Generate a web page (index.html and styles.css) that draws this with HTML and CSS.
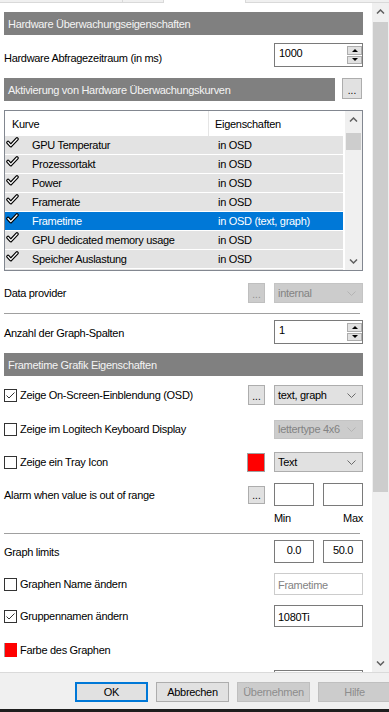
FILE: index.html
```html
<!DOCTYPE html>
<html lang="de">
<head>
  <meta charset="UTF-8" />
  <meta name="viewport" content="width=device-width, initial-scale=1.0"/>
  <title>Überwachung - Eigenschaften</title>
  <link rel="stylesheet" href="styles.css">
</head>
<body>
  <div class="window">

    <!-- Reiter oben (nur die Unterkante sichtbar) -->
    <div class="tab-strip">
      <div class="tab tab-a"></div>
      <div class="tab tab-b"></div>
      <div class="tab tab-active"></div>
      <div class="tab tab-c"></div>
    </div>

    <div class="content">
      <div class="pane">

        <div class="section-bar bar-first">Hardware Überwachungseigenschaften</div>

        <div class="row row-poll">
          <span class="label label-low">Hardware Abfragezeitraum (in ms)</span>
          <div class="spin">
            <span class="spin-value">1000</span>
            <div class="spin-buttons">
              <span class="spin-btn up"></span>
              <span class="spin-btn down"></span>
            </div>
          </div>
        </div>

        <div class="bar-row">
          <div class="section-bar">Aktivierung von Hardware Überwachungskurven</div>
          <button class="dots-btn tall">...</button>
        </div>

        <!-- Liste der Kurven -->
        <div class="curve-list">
          <div class="curve-main">
            <div class="curve-head">
              <span class="head-name">Kurve</span>
              <span class="head-prop">Eigenschaften</span>
            </div>
            <div class="curve-rows" id="curve-rows"></div>
          </div>
          <div class="list-scroll">
            <span class="arrow-cell">
              <svg width="9" height="5" viewBox="0 0 9 5"><polyline points="1,4.5 4.5,1 8,4.5" fill="none" stroke="#606060" stroke-width="1.5"/></svg>
            </span>
            <span class="list-thumb"></span>
            <span class="scroll-space"></span>
            <span class="arrow-cell">
              <svg width="9" height="5" viewBox="0 0 9 5"><polyline points="1,0.5 4.5,4 8,0.5" fill="none" stroke="#606060" stroke-width="1.5"/></svg>
            </span>
          </div>
        </div>

        <div class="row row-provider">
          <span class="label">Data provider</span>
          <div class="controls">
            <button class="dots-btn disabled">...</button>
            <div class="combo disabled">
              <span>internal</span>
              <svg width="9" height="5" viewBox="0 0 9 5"><polyline points="0.5,0.5 4.5,4.5 8.5,0.5" fill="none" stroke="#b4b4b4" stroke-width="1"/></svg>
            </div>
          </div>
        </div>

        <div class="separator sep-first"></div>

        <div class="row row-columns">
          <span class="label label-low-2">Anzahl der Graph-Spalten</span>
          <div class="spin">
            <span class="spin-value">1</span>
            <div class="spin-buttons">
              <span class="spin-btn up"></span>
              <span class="spin-btn down"></span>
            </div>
          </div>
        </div>

        <div class="section-bar bar-third">Frametime Grafik Eigenschaften</div>

        <div class="row row-osd">
          <label class="label check-label">
            <span class="check-box">
              <svg width="11" height="11" viewBox="0 0 11 11"><polyline points="1.5,5.5 4,8 9.5,2.5" fill="none" stroke="#333" stroke-width="1"/></svg>
            </span>
            Zeige On-Screen-Einblendung (OSD)
          </label>
          <div class="controls">
            <button class="dots-btn">...</button>
            <div class="combo">
              <span>text, graph</span>
              <svg width="9" height="5" viewBox="0 0 9 5"><polyline points="0.5,0.5 4.5,4.5 8.5,0.5" fill="none" stroke="#6b6b6b" stroke-width="1"/></svg>
            </div>
          </div>
        </div>

        <div class="row row-logi">
          <label class="label check-label">
            <span class="check-box"></span>
            Zeige im Logitech Keyboard Display
          </label>
          <div class="controls">
            <div class="combo disabled">
              <span>lettertype 4x6</span>
              <svg width="9" height="5" viewBox="0 0 9 5"><polyline points="0.5,0.5 4.5,4.5 8.5,0.5" fill="none" stroke="#b4b4b4" stroke-width="1"/></svg>
            </div>
          </div>
        </div>

        <div class="row row-tray">
          <label class="label check-label">
            <span class="check-box"></span>
            Zeige ein Tray Icon
          </label>
          <div class="controls">
            <span class="swatch"></span>
            <div class="combo">
              <span>Text</span>
              <svg width="9" height="5" viewBox="0 0 9 5"><polyline points="0.5,0.5 4.5,4.5 8.5,0.5" fill="none" stroke="#6b6b6b" stroke-width="1"/></svg>
            </div>
          </div>
        </div>

        <div class="row row-alarm">
          <span class="label">Alarm when value is out of range</span>
          <div class="controls">
            <button class="dots-btn short">...</button>
            <div class="pair">
              <input class="field small" type="text" value="">
              <input class="field small" type="text" value="">
            </div>
          </div>
        </div>

        <div class="minmax">
          <span>Min</span>
          <span>Max</span>
        </div>

        <div class="separator sep-second"></div>

        <div class="row row-limits">
          <span class="label">Graph limits</span>
          <div class="pair">
            <input class="field small centered" type="text" value="0.0">
            <input class="field small centered" type="text" value="50.0">
          </div>
        </div>

        <div class="row row-name">
          <label class="label check-label">
            <span class="check-box"></span>
            Graphen Name ändern
          </label>
          <input class="field wide" type="text" value="Frametime" disabled>
        </div>

        <div class="row row-group">
          <label class="label check-label">
            <span class="check-box">
              <svg width="11" height="11" viewBox="0 0 11 11"><polyline points="1.5,5.5 4,8 9.5,2.5" fill="none" stroke="#333" stroke-width="1"/></svg>
            </span>
            Gruppennamen ändern
          </label>
          <input class="field wide" type="text" value="1080Ti">
        </div>

        <div class="row row-color">
          <span class="label check-label">
            <span class="color-box"></span>
            Farbe des Graphen
          </span>
        </div>

        <div class="row row-next">
          <input class="field wide" type="text" value="">
        </div>

      </div>

      <!-- Bildlaufleiste des Fensters -->
      <div class="page-scroll">
        <span class="arrow-cell">
          <svg width="9" height="5" viewBox="0 0 9 5"><polyline points="1,4.5 4.5,1 8,4.5" fill="none" stroke="#606060" stroke-width="1.5"/></svg>
        </span>
        <span class="page-thumb"></span>
        <span class="scroll-space"></span>
        <span class="arrow-cell">
          <svg width="9" height="5" viewBox="0 0 9 5"><polyline points="1,0.5 4.5,4 8,0.5" fill="none" stroke="#606060" stroke-width="1.5"/></svg>
        </span>
      </div>
    </div>

    <!-- Knöpfe unten -->
    <div class="footer">
      <button class="dlg-btn default">OK</button>
      <button class="dlg-btn">Abbrechen</button>
      <button class="dlg-btn disabled">Übernehmen</button>
      <button class="dlg-btn disabled">Hilfe</button>
    </div>
    <div class="bottom-edge"></div>
  </div>

  <script>
    window.addEventListener('DOMContentLoaded', () => {
      // letzte Zeile ist nur angeschnitten, daher ohne Text
      const curves = [
        ['GPU Temperatur', 'in OSD'],
        ['Prozessortakt', 'in OSD'],
        ['Power', 'in OSD'],
        ['Framerate', 'in OSD'],
        ['Frametime', 'in OSD (text, graph)'],
        ['GPU dedicated memory usage', 'in OSD'],
        ['Speicher Auslastung', 'in OSD'],
        ['', '']
      ];
      const selected = 4;

      const tick = '<svg width="13" height="11" viewBox="0 0 13 11">' +
        '<polyline points="2,5.5 4.8,8.6 11,2" fill="none" stroke="#000" stroke-width="3.6" stroke-linejoin="round" stroke-linecap="round"/>' +
        '<polyline points="2,5.5 4.8,8.6 11,2" fill="none" stroke="#fff" stroke-width="1.3" stroke-linejoin="round" stroke-linecap="round"/>' +
        '</svg>';

      const rows = document.getElementById('curve-rows');
      curves.forEach((c, i) => {
        const row = document.createElement('div');
        row.className = 'curve' + (i === selected ? ' selected' : '');
        row.innerHTML = `<span class="tick">${tick}</span><span class="name">${c[0]}</span><span class="prop">${c[1]}</span>`;
        rows.appendChild(row);
      });
    });
  </script>
</body>
</html>
```

FILE: styles.css
```css
* {
  box-sizing: border-box;
}

body {
  margin: 0;
  font-family: "Liberation Sans", Arial, sans-serif;
  font-size: 11px;
  letter-spacing: -0.3px;
  line-height: 14px;
  color: #000;
  background: #fff;
}

button,
input {
  font: inherit;
  letter-spacing: inherit;
  color: inherit;
  margin: 0;
}

.window {
  width: 389px;
  height: 712px;
  display: flex;
  flex-direction: column;
  overflow: hidden;
}

/* Reiter */
.tab-strip {
  display: flex;
  height: 3px;
  flex-shrink: 0;
}

.tab {
  height: 3px;
  background: #f0f0f0;
  border-bottom: 1px solid #d9d9d9;
  border-right: 1px solid #d9d9d9;
}

.tab-a { width: 123px; }
.tab-b { width: 41px; }

.tab-active {
  width: 82px;
  background: #fff;
  border-bottom: none;
}

.tab-c {
  flex: 1;
  border-right: none;
}

/* Hauptbereich */
.content {
  display: flex;
  height: 669px;
  flex-shrink: 0;
}

.pane {
  width: 372px;
  padding: 0 9px 0 4px;
  overflow: hidden;
}

.section-bar {
  height: 23px;
  background: #808080;
  color: #f4f4f4;
  padding-left: 4px;
  display: flex;
  align-items: center;
  white-space: nowrap;
}

.bar-first { margin-top: 9px; }
.bar-third { margin-top: 9px; }

.bar-row {
  display: flex;
  align-items: flex-start;
  gap: 7px;
  margin-top: 11px;
  padding-right: 1px;
}

.bar-row .section-bar {
  flex: 1;
}

.row {
  display: flex;
  align-items: center;
}

.label {
  flex: 1;
  white-space: nowrap;
}

.label-low { padding-top: 5px; }
.label-low-2 { padding-top: 2px; }

.controls {
  display: flex;
  align-items: center;
  gap: 9px;
  margin-left: auto;
}

.row-poll { margin-top: 8px; height: 24px; }
.row-provider { margin-top: 12px; height: 20px; }
.row-columns { margin-top: 6px; height: 24px; }
.row-osd { margin-top: 9px; height: 20px; }
.row-logi { margin-top: 14px; height: 20px; }
.row-tray { margin-top: 13px; height: 20px; }
.row-alarm { margin-top: 11px; height: 23px; }
.row-limits { margin-top: 6px; height: 23px; }
.row-name { margin-top: 10px; height: 22px; }
.row-group { margin-top: 10px; height: 22px; }
.row-color { margin-top: 13px; height: 20px; }

.row-next {
  margin-top: 10px;
  height: 22px;
  justify-content: flex-end;
}

.separator {
  width: 356px;
  height: 1px;
  background: #a0a0a0;
}

.sep-first { margin-top: 10px; }
.sep-second { margin-top: 8px; }

/* Zahlenfeld mit Pfeilen */
.spin {
  width: 89px;
  height: 24px;
  border: 1px solid #7a7a7a;
  display: flex;
  justify-content: space-between;
  background: #fff;
}

.spin-value {
  padding: 2px 0 0 4px;
}

.spin-buttons {
  display: flex;
  flex-direction: column;
  gap: 1px;
  padding: 2px 0 2px 0;
}

.spin-btn {
  width: 15px;
  height: 9px;
  flex: 1;
  background: #e1e1e1;
  border: 1px solid #adadad;
  display: flex;
  align-items: center;
  justify-content: center;
}

.spin-btn::after {
  content: "";
  border-left: 3px solid transparent;
  border-right: 3px solid transparent;
}

.spin-btn.up::after {
  border-bottom: 3px solid #000;
}

.spin-btn.down::after {
  border-top: 3px solid #000;
}

/* Knöpfe mit drei Punkten */
.dots-btn {
  width: 17px;
  height: 20px;
  padding: 0;
  background: #e1e1e1;
  border: 1px solid #adadad;
  font-size: 10px;
  letter-spacing: 0;
  line-height: 12px;
  padding-top: 4px;
}

.dots-btn.tall {
  width: 20px;
  height: 21px;
  padding-top: 5px;
}

.dots-btn.short {
  height: 18px;
  padding-top: 3px;
}

.dots-btn.disabled {
  background: #cccccc;
  border-color: #bfbfbf;
  color: #8c8c8c;
}

/* Auswahlfelder */
.combo {
  width: 89px;
  height: 20px;
  background: #e1e1e1;
  border: 1px solid #adadad;
  display: flex;
  align-items: center;
  justify-content: space-between;
  padding: 0 6px 0 3px;
  white-space: nowrap;
}

.combo.disabled {
  background: #cccccc;
  border-color: #c4c4c4;
  color: #838383;
}

.row-logi .combo {
  height: 19px;
}

.swatch {
  width: 18px;
  height: 19px;
  background: #ff0000;
  border: 1px solid #a0a0a0;
}

/* Checkboxen */
.check-label {
  display: flex;
  align-items: center;
  gap: 3px;
}

.check-box {
  width: 13px;
  height: 13px;
  border: 1px solid #333;
  background: #fff;
  display: flex;
  flex-shrink: 0;
}

.color-box {
  width: 13px;
  height: 14px;
  background: #ff0000;
  border-left: 1px solid #a0a0a0;
  flex-shrink: 0;
}

/* Eingabefelder */
.field {
  height: 22px;
  border: 1px solid #7a7a7a;
  background: #fff;
  padding: 1px 3px 0 3px;
  line-height: 14px;
  outline: none;
  align-self: center;
}

.field.small {
  width: 40px;
  height: 23px;
}

.field.centered {
  text-align: center;
  padding: 0 0 3px 0;
}

.field.wide {
  width: 89px;
}

.field:disabled {
  border-color: #cccccc;
  color: #838383;
  background: #fff;
}

.pair {
  display: flex;
  gap: 9px;
}

.minmax {
  margin-top: 5px;
  margin-left: 270px;
  width: 89px;
  display: flex;
  justify-content: space-between;
}

/* Kurvenliste */
.curve-list {
  margin-top: 9px;
  height: 161px;
  border: 1px solid #828790;
  display: flex;
}

.curve-main {
  width: 338px;
  margin-right: 2px;
  overflow: hidden;
}

.curve-head {
  height: 25px;
  display: flex;
  align-items: center;
}

.head-name {
  width: 204px;
  height: 100%;
  padding-left: 7px;
  display: flex;
  align-items: center;
  border-right: 1px solid #e5e5e5;
}

.head-prop {
  padding-left: 6px;
}

.curve {
  height: 18px;
  margin-bottom: 1px;
  background: #e3e3e3;
  display: flex;
  align-items: center;
  white-space: nowrap;
}

.curve.selected {
  background: #0078d7;
  color: #fff;
}

.tick {
  width: 27px;
  height: 100%;
  padding: 1px 0 0 1px;
}

.tick svg {
  display: block;
}

.name {
  width: 186px;
}

.list-scroll {
  width: 17px;
  background: #f0f0f0;
  display: flex;
  flex-direction: column;
}

.arrow-cell {
  height: 17px;
  display: flex;
  align-items: center;
  justify-content: center;
  flex-shrink: 0;
}

.list-thumb {
  height: 17px;
  margin: 5px 1px 0 1px;
  background: #cdcdcd;
}

.scroll-space {
  flex: 1;
}

/* Bildlaufleiste rechts */
.page-scroll {
  width: 17px;
  background: #f0f0f0;
  display: flex;
  flex-direction: column;
}

.page-thumb {
  height: 470px;
  margin: 2px 1px 0 1px;
  background: #cdcdcd;
}

/* Fußzeile */
.footer {
  height: 37px;
  flex-shrink: 0;
  background: #f0f0f0;
  border-top: 1px solid #dadada;
  display: flex;
  gap: 8px;
  padding: 9px 0 0 75px;
}

.dlg-btn {
  width: 73px;
  height: 20px;
  flex-shrink: 0;
  background: #e1e1e1;
  border: 1px solid #adadad;
  padding: 0;
}

.dlg-btn.default {
  border: 2px solid #0078d7;
}

.dlg-btn.disabled {
  background: #cccccc;
  border-color: #bfbfbf;
  color: #8d8d8d;
}

.bottom-edge {
  height: 3px;
  background: #1e1e1e;
  flex-shrink: 0;
}
```
